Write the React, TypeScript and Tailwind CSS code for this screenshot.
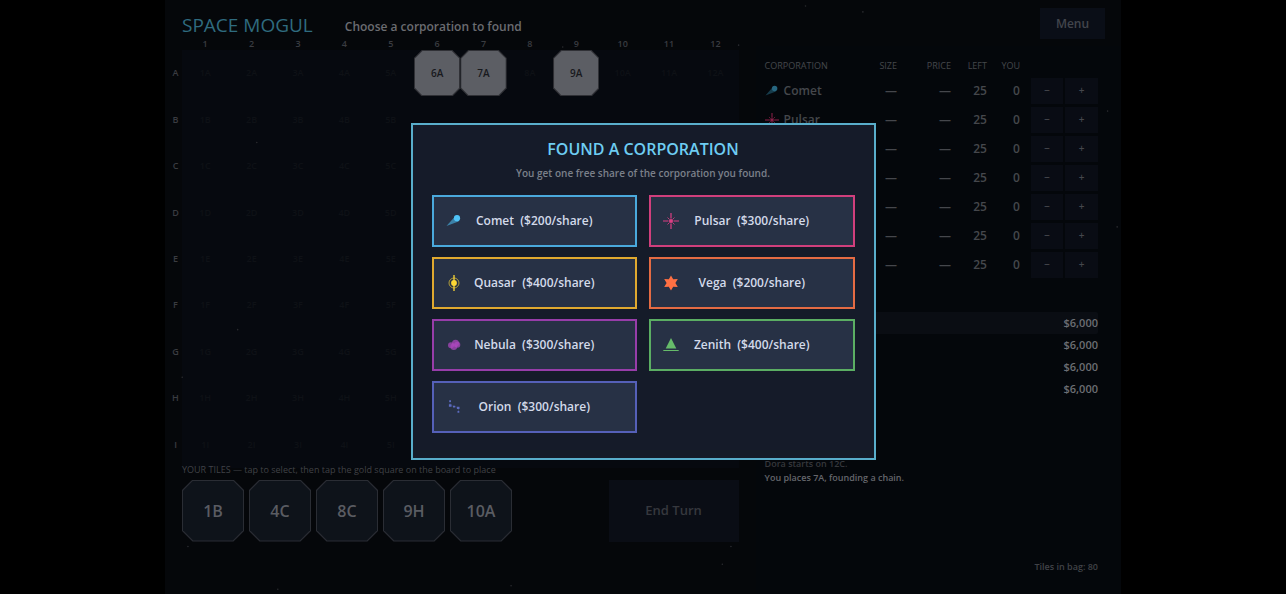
import type { ReactNode } from "react";
import clsx from "clsx";

const OCTAGON =
  "[clip-path:polygon(17%_0,83%_0,100%_17%,100%_83%,83%_100%,17%_100%,0_83%,0_17%)]";

const columns = Array.from({ length: 12 }, (_, i) => i + 1);
const rows = ["A", "B", "C", "D", "E", "F", "G", "H", "I"];
const placed = ["6A", "7A", "9A"];
const hand = ["1B", "4C", "8C", "9H", "10A"];
const cash = ["$6,000", "$6,000", "$6,000", "$6,000"];

const stars = [
  ["67%", "1%"],
  ["73%", "2%"],
  ["98.6%", "18.7%"],
  ["99.6%", "38.2%"],
  ["2.4%", "92%"],
  ["11.8%", "99.2%"],
  ["36.2%", "98.6%"],
  ["59.2%", "92%"],
  ["58.3%", "95%"],
  ["9.6%", "24%"],
  ["7.6%", "55.5%"],
  ["1.8%", "63.5%"],
  ["41.6%", "7.9%"],
  ["60%", "7.6%"],
];

const glyphs: Record<string, ReactNode> = {
  Comet: (
    <>
      <path d="M0.5 13 L8.5 4 L12.5 8.5 Z" opacity="0.55" />
      <circle cx="11" cy="5.2" r="3.1" />
    </>
  ),
  Pulsar: (
    <>
      <circle cx="8" cy="8" r="2" />
      <path
        d="M8 0v5.5M8 10.5V16M0 8h5.5M10.5 8H16"
        stroke="currentColor"
        strokeWidth="1.2"
      />
      <path
        d="M4.5 4.5l2 2M11.5 4.5l-2 2M4.5 11.5l2-2M11.5 11.5l-2-2"
        stroke="currentColor"
        strokeWidth="1"
        opacity="0.8"
      />
    </>
  ),
  Quasar: (
    <>
      <circle cx="8" cy="8" r="2.9" />
      <circle
        cx="8"
        cy="8"
        r="5"
        fill="none"
        stroke="currentColor"
        strokeWidth="0.9"
        opacity="0.7"
      />
      <path d="M8 0v16" stroke="currentColor" strokeWidth="1.3" />
    </>
  ),
  Vega: (
    <path d="M8 0.5l2.2 3.7 4.6-0.1L12.4 8l2.4 3.9-4.6-0.1L8 15.5l-2.2-3.7-4.6 0.1L3.6 8 1.2 4.1l4.6 0.1Z" />
  ),
  Nebula: (
    <>
      <circle cx="5" cy="8.3" r="3" opacity="0.75" />
      <circle cx="9.5" cy="6.3" r="3.5" opacity="0.75" />
      <circle cx="7.8" cy="9.8" r="3.3" opacity="0.75" />
      <circle cx="11.3" cy="7.8" r="3" opacity="0.75" />
    </>
  ),
  Zenith: <path d="M8 1l5.3 10.4H2.7ZM0.3 13h15.4v1H0.3Z" />,
  Orion: (
    <>
      <path
        d="M4 2v4.5l5 1 3.5 1.5v4"
        fill="none"
        stroke="currentColor"
        strokeWidth="0.7"
        opacity="0.4"
      />
      <path d="M3.2 1.2h1.8v1.8H3.2ZM2.9 5.3h2.6v2.4H2.9ZM7 6.8h2.2v1.6H7ZM10.9 7.7h2.6v2.4h-2.6ZM11.5 12h1.8v1.8h-1.8Z" />
    </>
  ),
};

const corporations = [
  {
    name: "Comet",
    price: 200,
    border: "border-[#4aa9dc]",
    icon: "text-[#4fc3f7]",
    dim: "text-[#276680]",
  },
  {
    name: "Pulsar",
    price: 300,
    border: "border-[#d03f7c]",
    icon: "text-[#dc3f84]",
    dim: "text-[#8a2048]",
  },
  {
    name: "Quasar",
    price: 400,
    border: "border-[#e0a92f]",
    icon: "text-[#fdd835]",
    dim: "text-[#665718]",
  },
  {
    name: "Vega",
    price: 200,
    border: "border-[#e46b43]",
    icon: "text-[#ff7043]",
    dim: "text-[#662d1b]",
  },
  {
    name: "Nebula",
    price: 300,
    border: "border-[#973da9]",
    icon: "text-[#ab47bc]",
    dim: "text-[#441c4b]",
  },
  {
    name: "Zenith",
    price: 400,
    border: "border-[#5bae63]",
    icon: "text-[#66bb6a]",
    dim: "text-[#294b2a]",
  },
  {
    name: "Orion",
    price: 300,
    border: "border-[#5560b8]",
    icon: "text-[#5c6bc0]",
    dim: "text-[#252b4d]",
  },
];

// the dialog sits over this corner of the board
const isCovered = (column: number, row: string) => column > 5 && row !== "A";

const Glyph = ({ name, className }: { name: string; className: string }) => (
  <svg
    viewBox="0 0 16 16"
    fill="currentColor"
    aria-hidden="true"
    className={clsx("shrink-0", className)}
  >
    {glyphs[name]}
  </svg>
);

const Starfield = () => (
  <svg
    aria-hidden="true"
    className="pointer-events-none absolute inset-0 h-full w-full text-[#2a2b2f]"
  >
    {stars.map(([x, y]) => (
      <circle key={x + y} cx={x} cy={y} r="0.8" fill="currentColor" />
    ))}
  </svg>
);

const Board = () => (
  <div className="grid grid-cols-[13px_1fr] grid-rows-[12px_auto] text-[9px] text-[#3a3c41]">
    <div className="col-start-2 grid grid-cols-12 text-center leading-3">
      {columns.map((column) => (
        <span key={column}>{column}</span>
      ))}
    </div>
    <div className="grid grid-rows-9 items-center text-center">
      {rows.map((row) => (
        <span key={row}>{row}</span>
      ))}
    </div>
    <div className="grid grid-cols-12 bg-[#06090f]">
      {rows.map((row) =>
        columns.map((column) => {
          const id = `${column}${row}`;
          return placed.includes(id) ? (
            <div
              key={id}
              className={clsx("aspect-square bg-[#303136] p-px", OCTAGON)}
            >
              <div
                className={clsx(
                  "flex h-full items-center justify-center bg-[#5c5e64] text-[10px] text-[#18191d]",
                  OCTAGON,
                )}
              >
                {id}
              </div>
            </div>
          ) : (
            <div
              key={id}
              className="flex aspect-square items-center justify-center text-[#0e1116]"
            >
              {!isCovered(column, row) && id}
            </div>
          );
        }),
      )}
    </div>
  </div>
);

const Hand = () => (
  <section className="-mt-1 pl-[13px]">
    <h2 className="mb-1 text-[9px] font-medium leading-3 text-[#404247]">
      YOUR TILES — tap to select, then tap the gold square on the board to place
    </h2>
    <div className="flex justify-between">
      <div className="flex gap-[5px]">
        {hand.map((tile) => (
          <button
            key={tile}
            type="button"
            className={clsx("h-[62px] w-[62px] bg-[#2a2d34] p-px", OCTAGON)}
          >
            <span
              className={clsx(
                "flex h-full items-center justify-center bg-[#0e131a] text-base text-[#5a5c62]",
                OCTAGON,
              )}
            >
              {tile}
            </span>
          </button>
        ))}
      </div>
      <button
        type="button"
        className="h-[62px] w-[130px] bg-[#0a0d15] text-[13px] text-[#36383e]"
      >
        End Turn
      </button>
    </div>
  </section>
);

const Market = () => (
  <table className="w-full table-fixed text-right text-xs text-[#45474c]">
    <colgroup>
      <col />
      <col className="w-[54px]" />
      <col className="w-[54px]" />
      <col className="w-9" />
      <col className="w-[33px]" />
      <col className="w-[78px]" />
    </colgroup>
    <thead className="text-[9px]">
      <tr className="h-[21px]">
        <th className="p-0 text-left font-medium">CORPORATION</th>
        <th className="p-0 font-medium">SIZE</th>
        <th className="p-0 font-medium">PRICE</th>
        <th className="p-0 font-medium">LEFT</th>
        <th className="p-0 font-medium">YOU</th>
        <td />
      </tr>
    </thead>
    <tbody>
      {corporations.map(({ name, dim }) => (
        <tr key={name} className="h-[29px]">
          <td className="p-0">
            <span className="flex items-center gap-[5px]">
              <Glyph name={name} className={clsx("h-[14px] w-[14px]", dim)} />
              {name}
            </span>
          </td>
          <td className="p-0">—</td>
          <td className="p-0">—</td>
          <td className="p-0">25</td>
          <td className="p-0">0</td>
          <td className="p-0">
            <span className="flex justify-end gap-[2px] text-[10px]">
              <button
                type="button"
                aria-label={`Sell ${name}`}
                className="h-[26px] w-8 bg-[#090c14]"
              >
                −
              </button>
              <button
                type="button"
                aria-label={`Buy ${name}`}
                className="h-[26px] w-[33px] bg-[#090c14]"
              >
                +
              </button>
            </span>
          </td>
        </tr>
      ))}
    </tbody>
  </table>
);

const Sidebar = () => (
  <aside className="ml-[17px] mt-2 flex flex-col bg-[#04070b] pb-5 pl-[9px] pr-[23px] pt-[9px]">
    <Market />
    <ul className="mt-[33px] text-right text-[11px] leading-[22px] text-[#6c6e73]">
      {cash.map((amount, i) => (
        <li key={i} className={clsx(i === 0 && "rounded-xs bg-[#0a0d13]")}>
          {amount}
        </li>
      ))}
    </ul>
    <div className="mt-[57px] text-[9px] leading-[14px] text-[#36383d]">
      <p>Dora starts on 12C.</p>
      <p className="text-[#64666b]">You places 7A, founding a chain.</p>
    </div>
    <p className="mt-auto text-right text-[9px] leading-[14px] text-[#404247]">
      Tiles in bag: 80
    </p>
  </aside>
);

const FoundDialog = () => (
  <div className="absolute inset-0 flex items-center justify-center pb-3">
    <div
      role="dialog"
      aria-modal="true"
      aria-labelledby="found-title"
      className="w-[465px] border-2 border-[#59aecb] bg-[#151b29] px-[19px] pb-[25px] pt-3 text-center"
    >
      <h2 id="found-title" className="text-base leading-6 text-[#6ecdf2]">
        FOUND A CORPORATION
      </h2>
      <p className="mb-3 mt-[2px] text-[10px] leading-5 text-[#7b8089]">
        You get one free share of the corporation you found.
      </p>
      <div className="grid grid-cols-2 gap-x-3 gap-y-[10px]">
        {corporations.map(({ name, price, border, icon }) => (
          <button
            key={name}
            type="button"
            className={clsx(
              "grid h-[52px] grid-cols-[16px_1fr_16px] items-center border-2 bg-[#273145] px-3 text-xs text-[#d3daea]",
              border,
            )}
          >
            <Glyph name={name} className={clsx("h-4 w-4", icon)} />
            <span className="whitespace-pre">{`${name}  ($${price}/share)`}</span>
          </button>
        ))}
      </div>
    </div>
  </div>
);

export default function App() {
  return (
    <div className="relative flex min-h-screen justify-center bg-black font-['Open_Sans',sans-serif] font-semibold">
      <div className="relative flex w-full max-w-[956px] flex-col bg-[#05070a]">
        <Starfield />
        <header className="flex h-[38px] items-start pl-[17px] pr-4">
          <h1 className="mr-8 mt-3 text-[19px] font-medium leading-[26px] text-[#2f6b7f]">
            SPACE MOGUL
          </h1>
          <p className="mt-4 text-xs leading-[22px] text-[#6b6c71]">
            Choose a corporation to found
          </p>
          <button
            type="button"
            className="ml-auto mt-2 h-[31px] w-[65px] bg-[#0a0e17] text-xs text-[#42454c]"
          >
            Menu
          </button>
        </header>
        <main className="grid flex-1 grid-cols-[3fr_2fr]">
          <div className="pl-1">
            <Board />
            <Hand />
          </div>
          <Sidebar />
        </main>
      </div>
      <FoundDialog />
    </div>
  );
}
